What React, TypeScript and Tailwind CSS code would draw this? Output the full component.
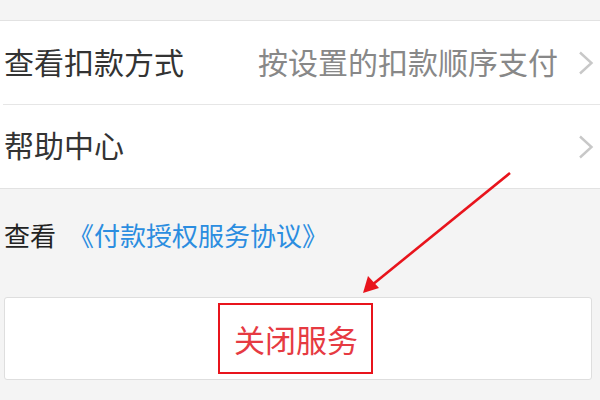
import React from 'react';

const Chevron = () => (
  <svg width="16" height="24" viewBox="0 0 16 24" className="shrink-0">
    <path d="M2 1.5 L13.5 12 L2 22.5" fill="none" stroke="#c8c8c8" strokeWidth="2.4" />
  </svg>
);

export default function App() {
  return (
    <div
      className="relative w-[600px] h-[400px] overflow-hidden bg-[#f4f4f4]"
      style={{ fontFamily: '"Noto Sans CJK SC", "Noto Sans", sans-serif' }}
    >
      <div className="h-[20px]" />
      {/* List */}
      <div className="bg-white border-y border-[#e2e2e2]">
        <div className="h-[83px] flex items-center pl-[4px] pr-[6px]">
          <span className="text-[30px] leading-none text-[#333] -mt-[4px]">查看扣款方式</span>
          <span className="ml-auto mr-[20px] text-[30px] leading-none text-[#888] -mt-[4px]">按设置的扣款顺序支付</span>
          <Chevron />
        </div>
        <div className="ml-[3px] h-px bg-[#e6e6e6]" />
        <div className="h-[83px] flex items-center pl-[4px] pr-[6px]">
          <span className="text-[30px] leading-none text-[#333] -mt-[6px]">帮助中心</span>
          <span className="ml-auto" />
          <Chevron />
        </div>
      </div>

      {/* Agreement */}
      <div className="pt-[33px] pb-[49px] flex items-center pl-[4px]">
        <span className="text-[26px] leading-none text-[#222]">查看</span>
        <span className="ml-[12px] text-[26px] leading-none text-[#2b8de0]">《付款授权服务协议》</span>
      </div>

      {/* Close button */}
      <div className="ml-[4px] mr-[8px] h-[83px] bg-white border border-[#dedede] rounded-[3px] flex items-center justify-center">
        <span className="text-[31px] leading-none text-[#e63a42] -ml-[4px]">关闭服务</span>
      </div>

      {/* annotation box */}
      <div className="absolute left-[218px] top-[303px] w-[155px] h-[71px] border-2 border-[#e8141c]" />

      {/* annotation arrow */}
      <svg className="absolute left-0 top-0" width="600" height="400" viewBox="0 0 600 400">
        <line x1="510" y1="173" x2="372" y2="285" stroke="#e8141c" strokeWidth="2.6" />
        <path d="M363 293 L368 276 L379 288 Z" fill="#e8141c" />
      </svg>
    </div>
  );
}
